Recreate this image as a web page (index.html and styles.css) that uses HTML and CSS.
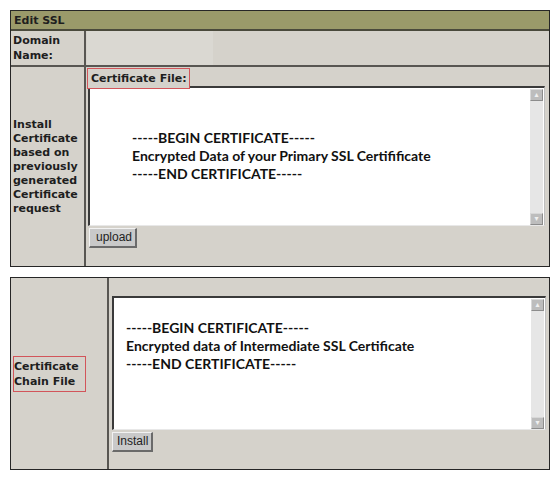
FILE: index.html
```html
<!DOCTYPE html>
<html lang="en">

<head>
    <meta charset="utf-8">
    <title>Edit SSL</title>
    <link rel="stylesheet" href="styles.css">
</head>

<body>
    <section class="panel">
        <div class="panel_head">Edit SSL</div>

        <div class="row row_domain">
            <div class="label">Domain<br>Name:</div>
            <div class="cell">
                <div class="domain_field"></div>
            </div>
        </div>

        <div class="row row_install">
            <div class="label label_middle">Install<br>Certificate<br>based on<br>previously<br>generated<br>Certificate<br>request</div>
            <div class="cell">
                <div class="field_title">Certificate File:</div>
                <div class="textbox textbox_primary">
                    <div class="cert_text">
                        -----BEGIN CERTIFICATE-----<br>
                        Encrypted Data of your Primary SSL Certifificate<br>
                        -----END CERTIFICATE-----
                    </div>
                    <div class="scroll">
                        <span class="scroll_btn">&#9652;</span>
                        <span class="scroll_btn">&#9662;</span>
                    </div>
                </div>
                <button class="knap knap_upload">upload</button>
            </div>
        </div>
    </section>

    <section class="panel panel_chain">
        <div class="row row_chain">
            <div class="label label_middle">
                <div class="marked">Certificate<br>Chain File</div>
            </div>
            <div class="cell cell_chain">
                <div class="textbox textbox_chain">
                    <div class="cert_text">
                        -----BEGIN CERTIFICATE-----<br>
                        Encrypted data of Intermediate SSL Certificate<br>
                        -----END CERTIFICATE-----
                    </div>
                    <div class="scroll">
                        <span class="scroll_btn">&#9652;</span>
                        <span class="scroll_btn">&#9662;</span>
                    </div>
                </div>
                <button class="knap knap_install">Install</button>
            </div>
        </div>
    </section>
</body>

</html>
```

FILE: styles.css
```css
body {
    margin: 0;
    padding: 10px;
    background: #ffffff;
    font-family: 'DejaVu Sans', Verdana, sans-serif;
    color: #1e1e1e;
}

.panel {
    width: 538px;
    border: 1px solid #262626;
    background: #d5d2cb;
}

.panel_chain {
    margin-top: 10px;
}

.panel_head {
    height: 18px;
    line-height: 19px;
    padding-left: 3px;
    background: #9a9a6a;
    border-bottom: 2px solid #4a4a3c;
    font-size: 11px;
    font-weight: bold;
}

.row {
    display: grid;
    grid-template-columns: 75px 1fr;
}

.row_domain {
    height: 34px;
    border-bottom: 2px solid #585652;
}

.row_install {
    height: 199px;
}

.row_chain {
    grid-template-columns: 98px 1fr;
    height: 191px;
}

.label {
    border-right: 2px solid #585652;
    padding: 2px 0 0 2px;
    font-size: 11px;
    font-weight: bold;
    line-height: 15px;
}

.row_install .label {
    line-height: 14px;
}

.label_middle {
    display: flex;
    align-items: center;
    padding-top: 0;
}

.marked {
    width: 71px;
    height: 34px;
    border: 1px solid #d2555a;
    display: flex;
    align-items: center;
}

.cell {
    padding-left: 1px;
    min-width: 0;
}

.domain_field {
    width: 126px;
    height: 34px;
    background: #dad8d2;
}

.field_title {
    display: inline-block;
    height: 19px;
    line-height: 20px;
    padding: 0 2px 0 3px;
    border: 1px solid #d2555a;
    font-size: 11px;
    font-weight: bold;
    margin-bottom: -3px;
    position: relative;
    z-index: 1;
    background: #d5d2cb;
}

.textbox {
    position: relative;
    margin: 0 4px 0 1px;
    background: #ffffff;
    border-top: 2px solid #3a3a3a;
    border-left: 2px solid #3a3a3a;
    border-right: 1px solid #bfbfbf;
    border-bottom: 1px solid #e8e8e8;
    display: flex;
    justify-content: space-between;
}

.textbox_primary {
    height: 137px;
}

.textbox_chain {
    height: 131px;
    margin: 0 3px 0 2px;
}

.cell_chain {
    padding-top: 18px;
}

.cert_text {
    font-family: Lato, 'Open Sans', sans-serif;
    font-weight: bold;
    font-size: 14px;
    line-height: 18px;
    color: #111111;
}

.textbox_primary .cert_text {
    padding: 41px 0 0 42px;
}

.textbox_chain .cert_text {
    padding: 21px 0 0 12px;
}

.scroll {
    flex: none;
    width: 13px;
    margin: 1px 1px 0 0;
    background: #e6e6e6;
    display: flex;
    flex-direction: column;
    justify-content: space-between;
}

.scroll_btn {
    height: 12px;
    background: #bdbdbd;
    border: 1px solid #d8d8d8;
    border-right-color: #8c8c8c;
    border-bottom-color: #8c8c8c;
    box-sizing: border-box;
    font-size: 8px;
    line-height: 10px;
    text-align: center;
    color: #f0f0f0;
}

.knap {
    margin: 1px 0 0 2px;
    height: 20px;
    padding: 0 6px;
    background: #c9c9c9;
    border: 1px solid #f2f2f2;
    border-right: 2px solid #6a6a6a;
    border-bottom: 2px solid #6a6a6a;
    font-family: 'Liberation Sans', Arial, sans-serif;
    font-size: 12px;
    color: #222222;
    cursor: pointer;
}

.knap_upload {
    width: 48px;
}

.knap_install {
    width: 41px;
    padding: 0 4px;
}
```
